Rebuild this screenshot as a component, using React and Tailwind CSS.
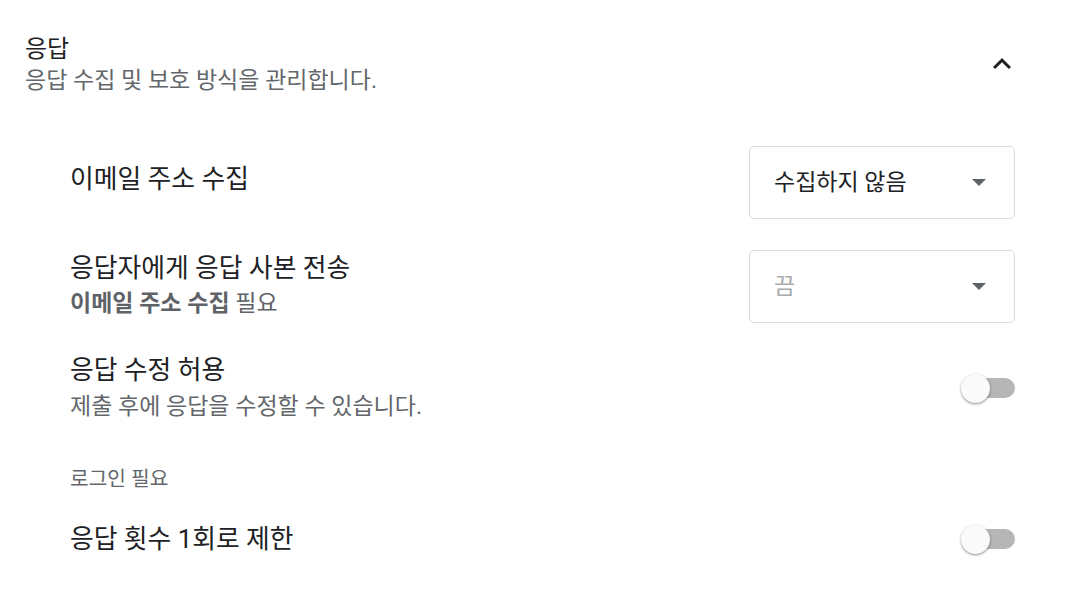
import React from "react";

function Caret() {
  return (
    <svg width="14" height="7" viewBox="0 0 14 7" className="shrink-0">
      <path d="M0 0 L14 0 L7 7 Z" fill="#5f6368" />
    </svg>
  );
}

function Dropdown({ value, disabled }) {
  return (
    <div className="w-[266px] h-[73px] shrink-0 border border-[#dadce0] rounded-[5px] flex items-center justify-between pl-[24px] pr-[28px]">
      <span className={"text-[23px] leading-[30px] " + (disabled ? "text-[#a8abaf]" : "text-[#202124]")}>{value}</span>
      <Caret />
    </div>
  );
}

function Toggle() {
  return (
    <div className="relative w-[54px] h-[28px] shrink-0">
      <div className="absolute right-0 top-[4px] w-[48px] h-[20px] rounded-full bg-[#b6b6b6]" />
      <div className="absolute left-0 top-0 w-[29px] h-[29px] rounded-full bg-[#fafafa] shadow-[0_1px_3px_rgba(0,0,0,0.35),0_1px_1px_rgba(0,0,0,0.14)]" />
    </div>
  );
}

export default function App() {
  return (
    <div className="w-[1071px] h-[593px] bg-white font-['Roboto','Noto_Sans_CJK_KR',sans-serif] overflow-hidden">
      <div className="flex justify-between items-start pl-[25px] pr-[51px] pt-[33px]">
        <div>
          <div className="text-[24px] leading-[32px] text-[#202124]">응답</div>
          <div className="text-[23px] leading-[32px] text-[#63676b]">응답 수집 및 보호 방식을 관리합니다.</div>
        </div>
        <svg width="36" height="36" viewBox="0 0 24 24" className="mt-[13px]">
          <path d="M7.41 15.41L12 10.83l4.59 4.58L18 14l-6-6-6 6z" fill="#202124" />
        </svg>
      </div>

      <div className="ml-[70px] mr-[56px]">
        <div className="mt-[49px] flex justify-between items-start">
          <div className="pt-[17px] text-[25.8px] leading-[32px] text-[#202124]">이메일 주소 수집</div>
          <Dropdown value="수집하지 않음" />
        </div>

        <div className="mt-[31px] flex justify-between items-start">
          <div className="pt-[2px]">
            <div className="text-[25.8px] leading-[32px] text-[#202124]">응답자에게 응답 사본 전송</div>
            <div className="mt-[5px] text-[23px] leading-[30px] text-[#5f6368]">
              <span className="font-bold">이메일 주소 수집</span> 필요
            </div>
          </div>
          <Dropdown value="끔" disabled />
        </div>

        <div className="mt-[31px] flex justify-between items-center">
          <div>
            <div className="text-[25.8px] leading-[32px] text-[#202124]">응답 수정 허용</div>
            <div className="mt-[6px] text-[23px] leading-[30px] text-[#63676b]">제출 후에 응답을 수정할 수 있습니다.</div>
          </div>
          <Toggle />
        </div>

        <div className="mt-[44px] text-[20.3px] leading-[26px] text-[#63676b]">로그인 필요</div>

        <div className="mt-[31px] flex justify-between items-center">
          <div className="text-[25.8px] leading-[32px] text-[#202124]">응답 횟수 1회로 제한</div>
          <Toggle />
        </div>
      </div>
    </div>
  );
}
